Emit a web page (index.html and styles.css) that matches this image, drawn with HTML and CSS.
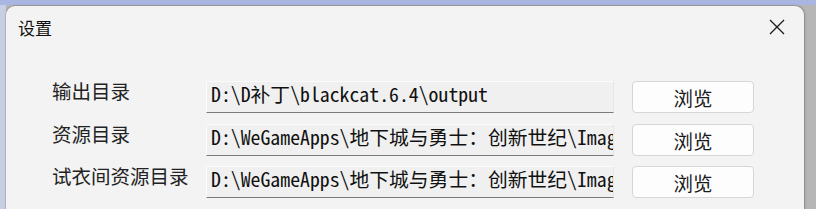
FILE: index.html
```html
<!DOCTYPE html>
<html lang="zh-CN">
<head>
<meta charset="utf-8">
<title>设置</title>
<link rel="stylesheet" href="styles.css">
</head>
<body>
<div class="backdrop">
  <div class="dialog">
    <div class="titlebar">
      <span class="title">设置</span>
      <span class="close">
        <svg width="16" height="16" viewBox="0 0 16 16"><path d="M1 1 L15 15 M15 1 L1 15" stroke="#1a1a1a" stroke-width="1.3" fill="none"/></svg>
      </span>
    </div>
    <div class="form">
      <div class="label">输出目录</div>
      <div class="field">D:\D补丁\blackcat.6.4\output</div>
      <div class="btn">浏览</div>

      <div class="label">资源目录</div>
      <div class="field">D:\WeGameApps\地下城与勇士：创新世纪\Imag</div>
      <div class="btn">浏览</div>

      <div class="label">试衣间资源目录</div>
      <div class="field">D:\WeGameApps\地下城与勇士：创新世纪\Imag</div>
      <div class="btn">浏览</div>
    </div>
  </div>
</div>
</body>
</html>
```
FILE: styles.css
```css
html, body {
  margin: 0;
  padding: 0;
  width: 816px;
  height: 209px;
  overflow: hidden;
}
body {
  background:
    linear-gradient(#a9b6e2, #a9b6e2) 0 0 / 100% 5px no-repeat,
    linear-gradient(#c8cfe4, #c8cfe4) 0 0 / 6px 100% no-repeat,
    #b6b6b6;
  font-family: "Noto Sans CJK SC", "Noto Sans", sans-serif;
}
.backdrop {
  padding: 6px 12px 0 6px;
  height: 203px;
}
.dialog {
  height: 210px;
  background: #f3f3f3;
  border-radius: 9px 9px 0 0;
  box-shadow: 0 0 0 1px rgba(0,0,0,0.12), 1px 0 3px rgba(0,0,0,0.15);
}
.titlebar {
  display: flex;
  align-items: center;
  justify-content: space-between;
  height: 42px;
  padding: 0 19px 0 12px;
}
.title {
  font-size: 17px;
  color: #111;
  line-height: 20px;
  margin-top: 1px;
}
.close {
  display: flex;
  width: 16px;
  height: 16px;
}
.form {
  display: grid;
  grid-template-columns: 154px 408px 140px;
  grid-auto-rows: 32px;
  column-gap: 0;
  row-gap: 10.5px;
  padding: 33px 0 0 46px;
}
.label {
  font-size: 19.5px;
  line-height: 20px;
  color: #222;
  white-space: nowrap;
}
.field {
  background: #f0f0f0;
  border-top: 1px solid #fbfbfb;
  border-left: 1px solid #fbfbfb;
  border-right: 1px solid #e6e6e6;
  border-bottom: 1px solid #7a7a7a;
  box-sizing: border-box;
  padding: 0 0 0 4px;
  font-family: "Noto Sans Mono CJK SC", "Liberation Mono", monospace;
  font-size: 19.8px;
  line-height: 24px;
  color: #111;
  white-space: nowrap;
  overflow-x: clip;
  overflow-y: visible;
}
.btn {
  margin-left: 18px;
  background: #fdfdfd;
  border: 1px solid #d6d6d6;
  border-radius: 4px;
  box-sizing: border-box;
  display: flex;
  align-items: center;
  justify-content: center;
  font-size: 19.5px;
  color: #1a1a1a;
  padding-top: 1px;
}
```
